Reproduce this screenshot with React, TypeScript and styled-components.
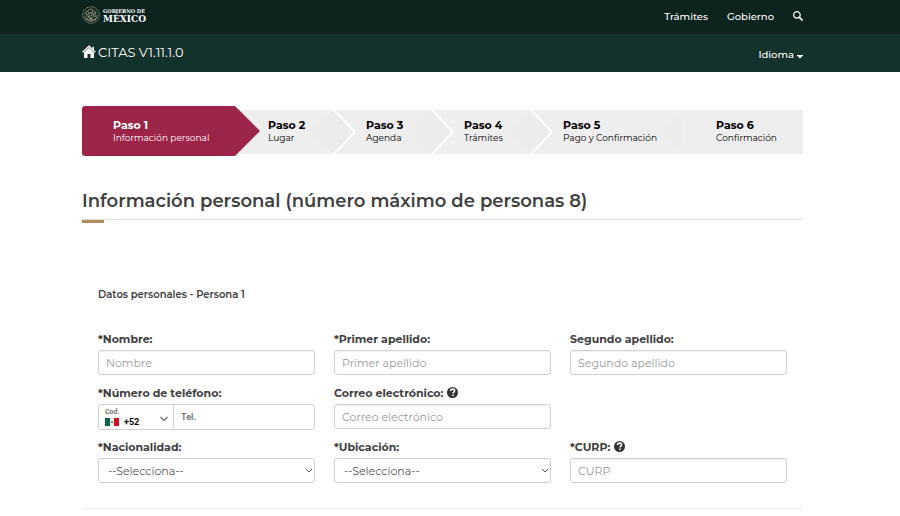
import React from "react";
import styled, { createGlobalStyle, css } from "styled-components";

const GlobalStyle = createGlobalStyle`
  *, *::before, *::after { box-sizing: border-box; }
  body {
    margin: 0;
    background: #fff;
    color: #404041;
    font-family: Montserrat, Inter, sans-serif;
    font-size: 11px;
    overflow-x: hidden;
  }
  button, input, select { font: inherit; color: inherit; }
`;

const gutter = css`
  padding-left: 82px;
  padding-right: 97px;
`;

const TopBar = styled.header`
  ${gutter}
  height: 34px;
  background: #0c231e;
  display: flex;
  align-items: center;
  justify-content: space-between;
  color: #fff;
`;

const Brand = styled.a`
  display: flex;
  align-items: center;
  gap: 3px;
  color: #fff;
  text-decoration: none;
  margin-bottom: 5px;
`;

const BrandText = styled.span`
  display: flex;
  flex-direction: column;
  padding-top: 2px;
  font-family: "DejaVu Serif", serif;
  font-weight: 700;
`;

const BrandSmall = styled.span`
  font-size: 5px;
  line-height: 6px;
`;

const BrandLarge = styled.span`
  font-size: 9px;
  line-height: 10px;
`;

const Nav = styled.nav`
  display: flex;
  align-items: center;
  gap: 19px;
`;

const NavLink = styled.a`
  color: #fff;
  font-size: 10px;
  line-height: 16px;
  font-weight: 500;
  text-decoration: none;
`;

const PlainButton = styled.button`
  display: flex;
  align-items: center;
  gap: 3px;
  padding: 0;
  border: 0;
  background: none;
  color: #fff;
  font-size: 10px;
  line-height: 16px;
  font-weight: 500;
  cursor: pointer;
`;

const SearchButton = styled(PlainButton)`
  margin-bottom: 2px;
`;

const SubBar = styled.div`
  ${gutter}
  height: 38px;
  background: #13322b;
  display: flex;
  align-items: center;
  justify-content: space-between;
  color: #fff;
`;

const AppLink = styled.a`
  display: flex;
  align-items: center;
  gap: 2px;
  color: #fff;
  font-size: 13px;
  line-height: 18px;
  text-decoration: none;
  margin-bottom: 2px;
`;

const Language = styled(PlainButton)`
  margin-top: 4px;
`;

const LanguageArrow = styled.svg`
  margin-top: 4px;
`;

const Main = styled.main`
  ${gutter}
  padding-top: 34px;
`;

const Steps = styled.ol`
  list-style: none;
  margin: 0;
  padding: 0;
  display: grid;
  grid-template-columns: 178fr 95fr 98fr 99fr 132fr 119fr;
  align-items: end;
`;

const Step = styled.li<{ $active?: boolean; $indent: number }>`
  position: relative;
  height: 44px;
  margin-bottom: 2px;
  padding: 8px 0 0 ${(p) => p.$indent}px;
  background: #eee;
  color: #000;
  white-space: nowrap;
  ${(p) =>
    p.$active &&
    css`
      height: 50px;
      margin-bottom: 0;
      padding-top: 12px;
      color: #fff;
      background: linear-gradient(#eee, #eee) right 4px / 27px 44px no-repeat;
    `}
`;

const StepShape = styled.svg`
  position: absolute;
  right: -2px;
  top: 0;
  width: 50px;
  height: 44px;
`;

const ActiveShape = styled.span`
  position: absolute;
  inset: 0;
  background: #9d2449;
  border-radius: 3px 0 0 3px;
  clip-path: polygon(0 0, calc(100% - 25px) 0, 100% 50%, calc(100% - 25px) 100%, 0 100%);
`;

const StepName = styled.strong`
  position: relative;
  display: block;
  font-size: 11px;
  line-height: 14px;
  font-weight: 700;
`;

const StepDetail = styled.span`
  position: relative;
  display: block;
  font-size: 9px;
  line-height: 12px;
`;

const Title = styled.h1`
  position: relative;
  margin: 31px 0 0;
  padding-bottom: 3px;
  border-bottom: 1px solid #ddd;
  font-size: 18px;
  line-height: 29px;
  font-weight: 600;
  &::after {
    content: "";
    position: absolute;
    left: 0;
    bottom: -4px;
    width: 22px;
    height: 3px;
    background: #b38e5d;
  }
`;

const FormArea = styled.section`
  ${gutter}
`;

const Form = styled.form`
  padding: 66px 16px 24px;
  border-bottom: 1px solid #eee;
`;

const Legend = styled.h2`
  margin: 0 0 27px;
  font-size: 10px;
  line-height: 17px;
  font-weight: 600;
`;

const Fields = styled.div`
  display: grid;
  grid-template-columns: repeat(3, 1fr);
  grid-auto-rows: 46px;
  column-gap: 19px;
  row-gap: 8px;
`;

const Field = styled.div<{ $first?: boolean }>`
  min-width: 0;
  ${(p) => p.$first && "grid-column-start: 1;"}
`;

const Label = styled.label`
  display: flex;
  align-items: center;
  gap: 4px;
  height: 20px;
  padding-bottom: 2px;
  font-size: 11px;
  line-height: 18px;
  font-weight: 700;
  white-space: nowrap;
`;

const box = css`
  display: block;
  width: 100%;
  height: 25px;
  border: 1px solid #d0d0d0;
  border-radius: 3px;
  background: #fff;
  font-size: 11px;
  line-height: 18px;
`;

const TextInput = styled.input`
  ${box}
  padding: 0 7px;
  box-shadow: inset 0 1px 1px rgba(0, 0, 0, 0.06);
  &::placeholder { color: #999; opacity: 1; }
`;

const SelectWrap = styled.div`
  position: relative;
`;

const Select = styled.select`
  ${box}
  appearance: none;
  padding: 0 20px 0 9px;
  color: #555;
`;

const SelectArrow = styled.svg`
  position: absolute;
  right: 2px;
  top: 10px;
  pointer-events: none;
`;

const Phone = styled.div`
  display: flex;
  height: 26px;
  border: 1px solid #d0d0d0;
  border-radius: 3px;
  font-family: Roboto, sans-serif;
  font-weight: 700;
`;

const CountryButton = styled.button`
  display: grid;
  grid-template-columns: 14px 1fr 8px;
  grid-template-rows: 9px 10px;
  column-gap: 5px;
  align-content: center;
  align-items: center;
  width: 75px;
  padding: 0 5px 0 6px;
  border: 0;
  border-right: 1px solid #d0d0d0;
  background: none;
  text-align: left;
  color: #000;
  font-size: 9px;
  line-height: 10px;
`;

const CountryCaption = styled.span`
  grid-column: 1 / 3;
  color: #777;
  font-size: 7px;
  line-height: 9px;
`;

const CountryArrow = styled.svg`
  grid-row: 1 / 3;
  grid-column: 3;
  margin-top: 4px;
`;

const PhoneInput = styled.input`
  flex: 1;
  min-width: 0;
  border: 0;
  padding: 0 7px;
  background: none;
  font-size: 9px;
  &::placeholder { color: #777; opacity: 1; }
`;

const HelpMark = styled.svg`
  margin-bottom: 2px;
`;

const Emblem = () => (
  <svg width="18" height="18" viewBox="0 0 36 36" fill="none" stroke="#a39c82" aria-hidden="true">
    <circle cx="18" cy="18" r="16.5" strokeWidth="2" strokeDasharray="2 1" />
    <circle cx="18" cy="18" r="12.5" strokeWidth="1" opacity=".6" />
    <path d="M13 9c4-4 9-2 9 2l-4 2c5 0 7 4 5 8l-5 4-7-3 4-2-4-4 5-1-5-4zM16 12l5 6-6 3M23 10l5 4-4 2 5 4-4 2M10 10l-3 5 4 2-3 4" strokeWidth="1.7" />
    <path d="M6 22c3 7 8 8 12 8s9-2 12-8M8 26l5 1m10 1 5-2M14 26h8M18 23v6" strokeWidth="2" />
  </svg>
);

const HomeIcon = () => (
  <svg width="14" height="14" viewBox="0 0 14 14" aria-hidden="true">
    <path d="M.6 7.2 7 1.2l6.4 6" fill="none" stroke="#fff" strokeWidth="1.4" />
    <path d="M2 7.4 7 2.8l5 4.6V13H8.5V9h-3v4H2z" fill="#fff" />
    <path d="M10.4 1.8h1.5v3.6l-1.5-1.3z" fill="#fff" />
  </svg>
);

const SearchIcon = () => (
  <svg width="10" height="10" viewBox="0 0 10 10" fill="none" stroke="#fff" aria-hidden="true">
    <circle cx="3.9" cy="3.9" r="3.3" strokeWidth="1.2" />
    <path d="m6.2 6.2 3.4 3.4" strokeWidth="1.7" />
  </svg>
);

const HelpIcon = () => (
  <HelpMark width="11" height="11" viewBox="0 0 22 22" role="img" aria-label="Ayuda">
    <circle cx="11" cy="11" r="11" fill="#333" />
    <path d="M7.2 8c.2-5 8-5 8-.5 0 3-3.2 2.8-3.2 5.6" fill="none" stroke="#fff" strokeWidth="3.2" />
    <path d="M10.4 15h3.2v3.2h-3.2z" fill="#fff" />
  </HelpMark>
);

const steps = [
  { detail: "Información personal", indent: 31 },
  { detail: "Lugar", indent: 8 },
  { detail: "Agenda", indent: 11 },
  { detail: "Trámites", indent: 11 },
  { detail: "Pago y Confirmación", indent: 11 },
  { detail: "Confirmación", indent: 32 },
];

type FieldProps = { id: string; label: string; help?: boolean; first?: boolean };

const TextField = ({ id, label, help, placeholder }: FieldProps & { placeholder: string }) => (
  <Field>
    <Label htmlFor={id}>
      {label}
      {help && <HelpIcon />}
    </Label>
    <TextInput id={id} placeholder={placeholder} />
  </Field>
);

const SelectField = ({ id, label, first }: FieldProps) => (
  <Field $first={first}>
    <Label htmlFor={id}>{label}</Label>
    <SelectWrap>
      <Select id={id}>
        <option>--Selecciona--</option>
      </Select>
      <SelectArrow width="8" height="6" viewBox="0 0 8 6" fill="none" stroke="#555">
        <path d="m1 1 3 3 3-3" />
      </SelectArrow>
    </SelectWrap>
  </Field>
);

export default function App() {
  return (
    <>
      <GlobalStyle />
      <TopBar>
        <Brand href="#">
          <Emblem />
          <BrandText>
            <BrandSmall>GOBIERNO DE</BrandSmall>
            <BrandLarge>MÉXICO</BrandLarge>
          </BrandText>
        </Brand>
        <Nav>
          <NavLink href="#">Trámites</NavLink>
          <NavLink href="#">Gobierno</NavLink>
          <SearchButton aria-label="Buscar">
            <SearchIcon />
          </SearchButton>
        </Nav>
      </TopBar>
      <SubBar>
        <AppLink href="#">
          <HomeIcon />
          CITAS V1.11.1.0
        </AppLink>
        <Language aria-haspopup="menu">
          Idioma
          <LanguageArrow width="6" height="4" viewBox="0 0 6 4" aria-hidden="true">
            <path d="M0 0h6v.5l-3 3-3-3z" fill="#fff" />
          </LanguageArrow>
        </Language>
      </SubBar>
      <Main>
        <Steps>
          {steps.map((s, i) => (
            <Step key={s.detail} $active={i === 0} $indent={s.indent} aria-current={i === 0 ? "step" : undefined}>
              {i === 0 && <ActiveShape />}
              {i > 0 && i < 4 && (
                <StepShape viewBox="0 0 50 44" aria-hidden="true">
                  <path d="M3 22 26 0l23 22-23 22z" fill="#ececec" />
                  <path d="m26-1 22 23-22 23" fill="none" stroke="#fff" strokeWidth="2" />
                </StepShape>
              )}
              {i === 4 && (
                <StepShape viewBox="0 0 50 44" aria-hidden="true">
                  <path d="M26 22 47 1v42z" fill="#ececec" />
                  <path d="M46 0h3l-1 2zM46 44h3l-1-2z" fill="#fff" />
                </StepShape>
              )}
              <StepName>Paso {i + 1}</StepName>
              <StepDetail>{s.detail}</StepDetail>
            </Step>
          ))}
        </Steps>
        <Title>Información personal (número máximo de personas 8)</Title>
      </Main>
      <FormArea>
        <Form>
          <Legend>Datos personales - Persona 1</Legend>
          <Fields>
            <TextField id="nombre" label="*Nombre:" placeholder="Nombre" />
            <TextField id="primer" label="*Primer apellido:" placeholder="Primer apellido" />
            <TextField id="segundo" label="Segundo apellido:" placeholder="Segundo apellido" />
            <Field>
              <Label htmlFor="tel">*Número de teléfono:</Label>
              <Phone>
                <CountryButton type="button" aria-haspopup="listbox">
                  <CountryCaption>Cod.</CountryCaption>
                  <svg width="14" height="8" viewBox="0 0 14 8" aria-hidden="true">
                    <path d="M0 0h5v8H0z" fill="#006847" />
                    <path d="M5 0h4v8H5z" fill="#f4f4f4" />
                    <path d="M9 0h5v8H9z" fill="#ce1126" />
                    <circle cx="7" cy="4" r="1.2" fill="#a98962" />
                  </svg>
                  <span>+52</span>
                  <CountryArrow width="8" height="6" viewBox="0 0 8 6" fill="none" stroke="#666">
                    <path d="m.5 1 3.5 3.5L7.5 1" strokeWidth="1.2" />
                  </CountryArrow>
                </CountryButton>
                <PhoneInput id="tel" type="tel" placeholder="Tel." />
              </Phone>
            </Field>
            <TextField id="correo" label="Correo electrónico:" placeholder="Correo electrónico" help />
            <SelectField id="nacionalidad" label="*Nacionalidad:" first />
            <SelectField id="ubicacion" label="*Ubicación:" />
            <TextField id="curp" label="*CURP:" placeholder="CURP" help />
          </Fields>
        </Form>
      </FormArea>
    </>
  );
}
